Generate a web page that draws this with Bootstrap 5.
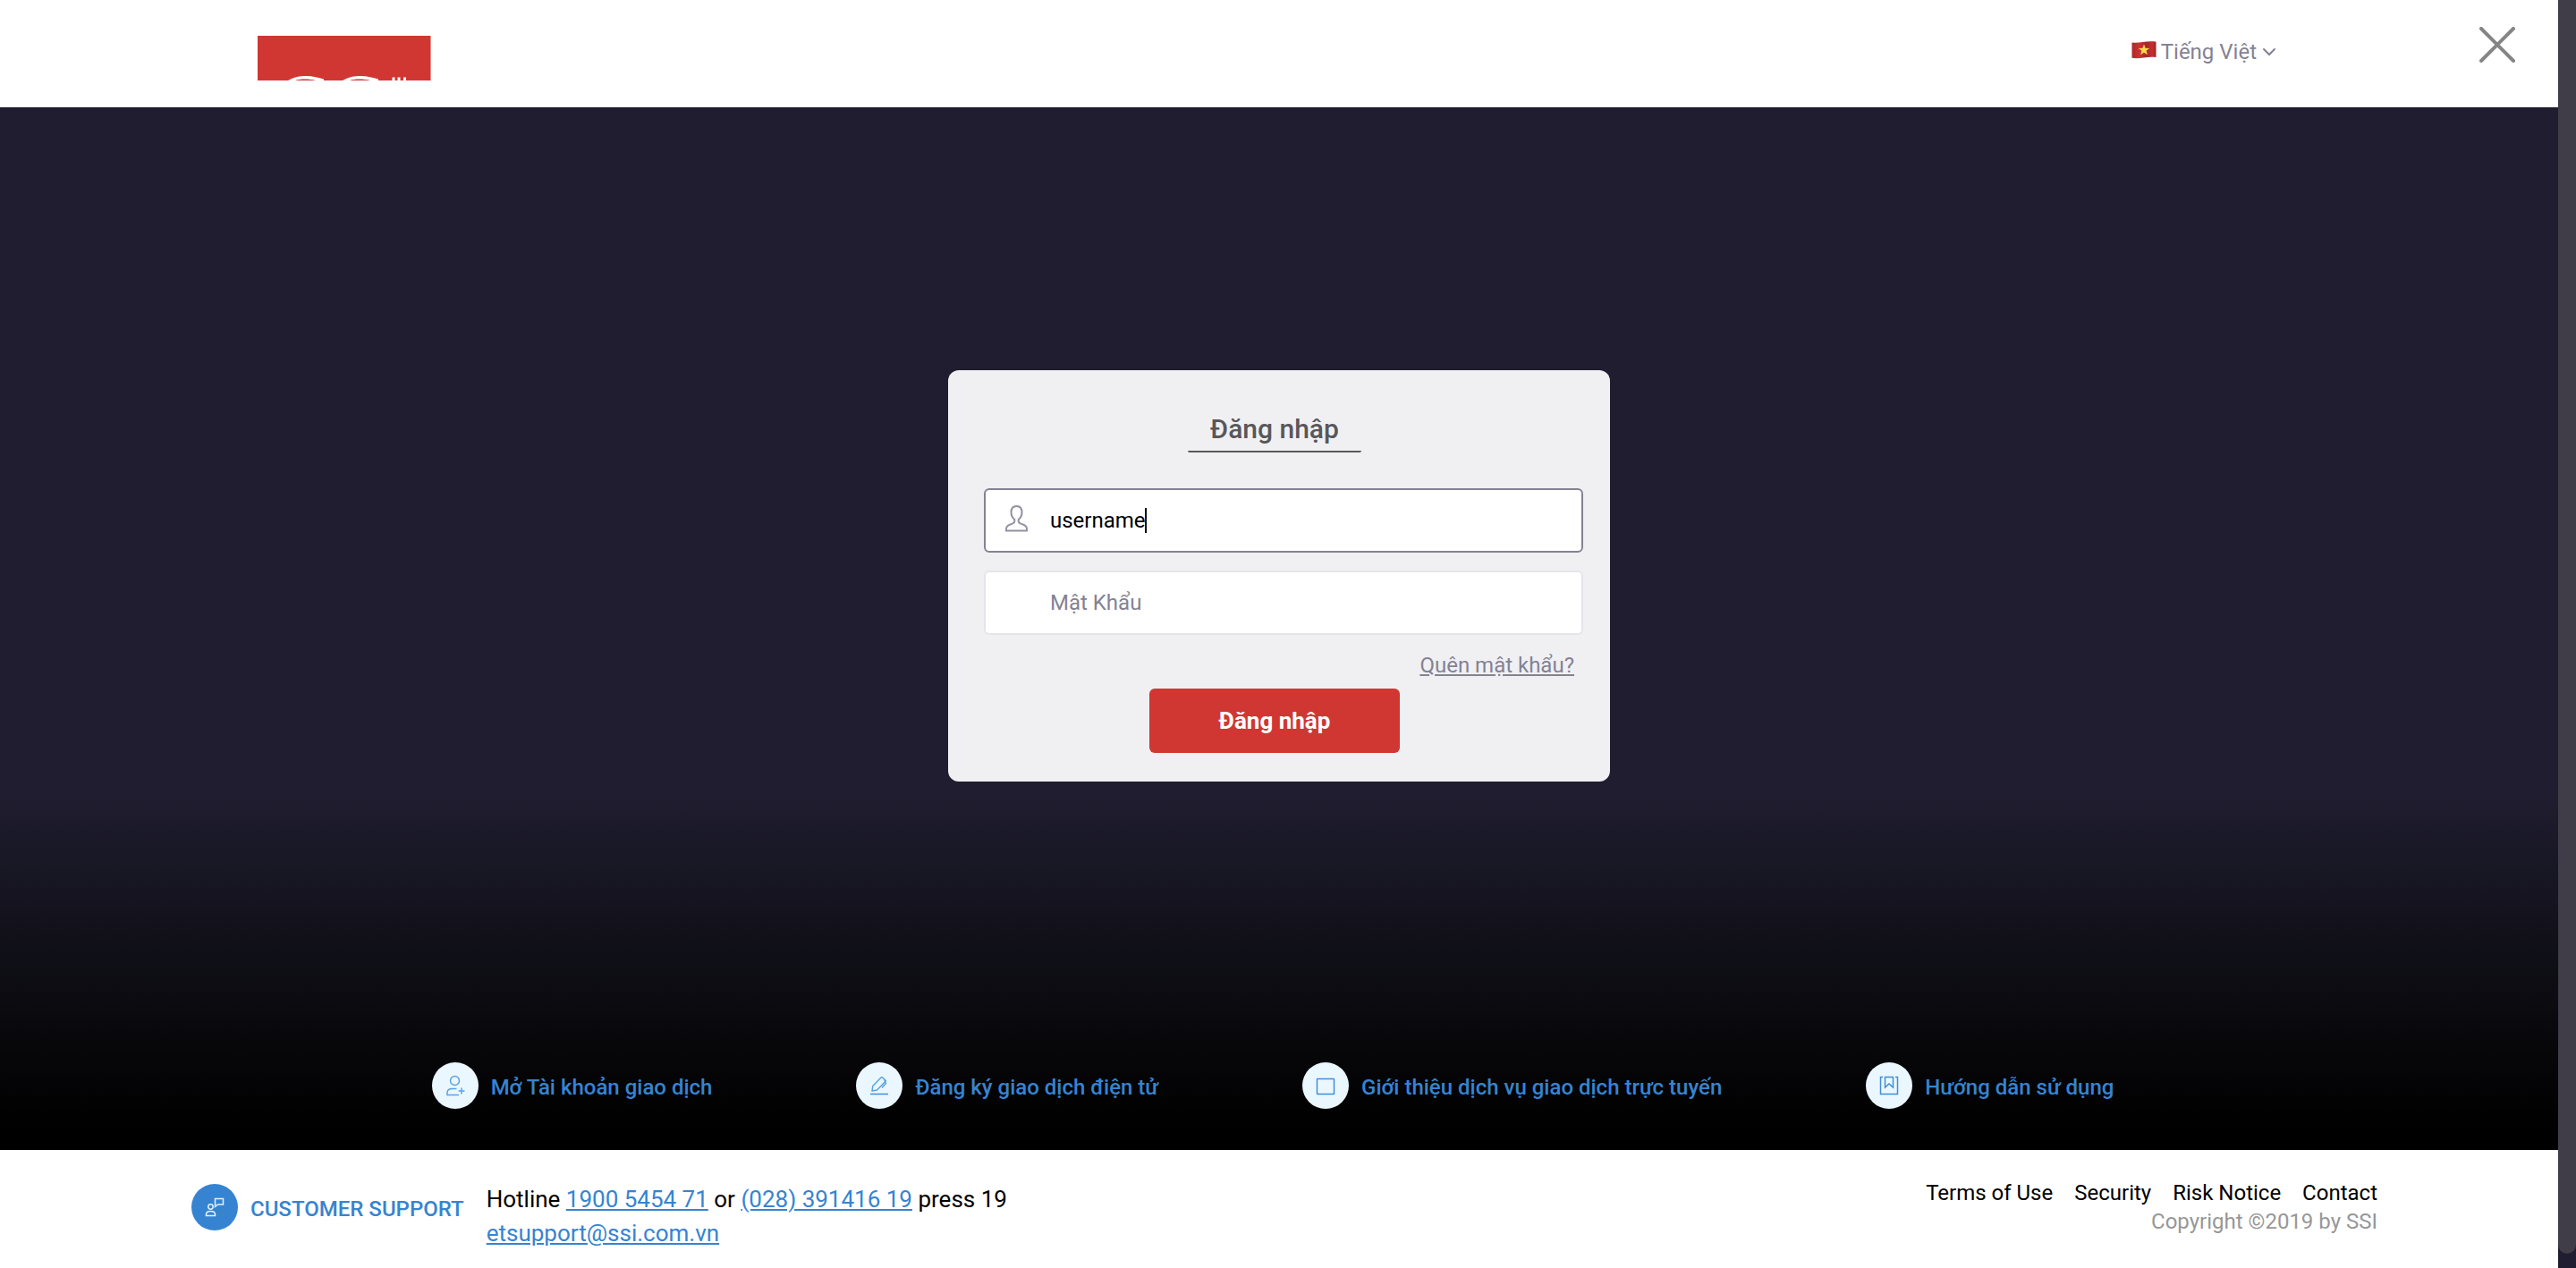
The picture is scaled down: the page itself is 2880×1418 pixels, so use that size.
<!DOCTYPE html>
<html lang="vi">
<head>
<meta charset="utf-8">
<meta name="viewport" content="width=device-width, initial-scale=1">
<title>SSI - Đăng nhập</title>
<link href="https://cdn.jsdelivr.net/npm/bootstrap@5.3.0/dist/css/bootstrap.min.css" rel="stylesheet">
<style>
  :root { --ink: #1f1d2f; --muted: #848293; --brand: #d03733; --blue: #3684d1; }
  body { font-family: Roboto, "Noto Sans", sans-serif; font-size: 24px; line-height: 32px; color: #000; background: var(--ink); }
  .page-col { min-width: 0; }
  .scroll-track { width: 20px; background: var(--ink); padding-bottom: 16px; }
  .scroll-thumb { background: #403d49; border-radius: 0 0 10px 10px; }
  .site-head { height: 120px; padding: 0 48px 0 288px; }
  .brand-logo { margin-top: 40px; }
  .lang-btn { margin: 42px 228px 0 0; color: var(--muted); font-size: 24px; line-height: 32px; gap: 5px; }
  .lang-btn .flag { margin-bottom: 4px; }
  .lang-btn .chevron { margin-left: 2px; }
  .close-btn { margin-top: 30px; }
  .hero { background: linear-gradient(#1f1d2f 0, #1f1d2f 66%, #0b0b10 86%, #000 98%); }
  .login-wrap { padding-top: 294px; }
  .login-card { width: 740px; padding: 44px 30px 32px 20px; background: #f0f0f3; border-radius: 12px; }
  .login-title { width: 194px; height: 48px; font-size: 30px; line-height: 44px; font-weight: 500; color: #58575a; border-bottom: 2px solid #58575a; border-radius: 2px; margin: 0 0 40px; }
  .field-list { margin-left: 20px; }
  .field-box { height: 72px; padding: 0 72px; font-size: 24px; line-height: 32px; color: #000; background: #fff; border: 2px solid #e4e4ea; border-radius: 6px; }
  .field-box:focus { box-shadow: none; border-color: var(--muted); color: #000; }
  .field-box::placeholder { color: var(--muted); opacity: 1; }
  .field-user { border-color: var(--muted); caret-color: transparent; }
  .user-glyph { left: 24px; top: 18px; }
  .text-caret { left: 180px; top: 22px; width: 2px; height: 28px; background: #000; }
  .field-gap { margin-bottom: 20px; }
  .forgot { color: var(--muted); margin: 18px 10px 10px 0; }
  .login-btn { width: 280px; height: 72px; font-size: 26px; font-weight: 700; color: #fff; background: var(--brand); border-radius: 6px; }
  .login-btn:hover { color: #fff; background: #b92f2b; }
  .quick-links { gap: 20px 161px; padding: 0 14px 46px 0; }
  .quick-links a { color: var(--blue); font-weight: 500; gap: 14px; }
  .disc { width: 52px; height: 52px; background: #ebf7ff; }
  .disc-blue { background: var(--blue); }
  .disc-label { padding-top: 3px; }
  .site-foot { min-height: 132px; padding: 0 202px 0 214px; background: #fff; }
  .foot-left a { color: var(--blue); }
  .support { margin-top: 38px; gap: 14px; color: var(--blue); font-weight: 500; }
  .hotline { margin: 36px 0 0 25px; font-size: 26px; line-height: 38px; }
  .foot-right { margin-top: 32px; }
  .foot-nav { gap: 24px; }
  .foot-nav a { color: #000; }
  .copyright { color: #979797; }
</style>
<script src="https://cdn.jsdelivr.net/npm/bootstrap@5.3.0/dist/js/bootstrap.bundle.min.js"></script>
</head>
<body>
<div class="d-flex min-vh-100">
  <div class="page-col flex-grow-1 d-flex flex-column">
    <header class="site-head bg-white d-flex align-items-start">
      <a href="#" class="brand-logo d-block lh-1" aria-label="SSI">
        <svg class="d-block" width="194" height="50" viewBox="0 0 194 50" fill="none">
          <rect width="193.500" height="50" fill="#d03733"/>
          <path d="M34 50C41 46 47 45 54 45C62 45 68 47 74 48.500V50H65C58 48 47 48 42 50Z" fill="#fff"/>
          <path d="M95 50C102 46 108 45 115 45C123 45 129 47 135 48.500V50H126C119 48 108 48 103 50Z" fill="#fff"/>
          <path d="M152 46.500v3.500M158 46.500v3.500M164.500 46.500v3.500" stroke="#fff" stroke-width="3"/>
        </svg>
      </a>
      <button type="button" class="lang-btn btn p-0 border-0 ms-auto d-flex align-items-center">
        <svg class="flag" width="28" height="20" viewBox="0 0 28 20">
          <defs><linearGradient id="flag"><stop stop-color="#b0262b"/><stop offset=".3" stop-color="#c93235"/><stop offset=".6" stop-color="#a9262b"/><stop offset=".85" stop-color="#c22f33"/><stop offset="1" stop-color="#9c2328"/></linearGradient></defs>
          <path d="M.5 1.500C8 3 18-1 27.500.8V18C18 16.500 9 20.500.5 18.800Z" fill="url(#flag)"/>
          <path d="M14 3.500l1.600 4.300 4.600.1-3.600 2.900 1.300 4.500-3.900-2.600-3.900 2.600 1.300-4.500-3.600-2.900 4.600-.1z" fill="#fbd94b"/>
        </svg>
        <span>Tiếng Việt</span>
        <svg class="chevron" width="14" height="10" viewBox="0 0 14 10" fill="none" stroke="#848293" stroke-width="2" stroke-linecap="round"><path d="M1 2l6 6 6-6"/></svg>
      </button>
      <button type="button" class="close-btn btn p-0 border-0" aria-label="Close">
        <svg class="d-block" width="40" height="40" viewBox="0 0 40 40" stroke="#858585" stroke-width="4" stroke-linecap="round"><path d="M2 2l36 36M38 2L2 38"/></svg>
      </button>
    </header>

    <main class="hero flex-grow-1 d-flex flex-column">
      <div class="login-wrap d-flex justify-content-center">
        <form class="login-card d-flex flex-column" onsubmit="return false">
          <h1 class="login-title text-center align-self-center">Đăng nhập</h1>
          <div class="field-list d-flex flex-column">
            <div class="position-relative field-gap">
              <input type="text" class="form-control field-box field-user" value="username" aria-label="Tên đăng nhập" autocomplete="off" spellcheck="false">
              <svg class="user-glyph position-absolute" width="26" height="32" viewBox="0 0 26 32" fill="none" stroke="#9391a2" stroke-width="2"><path d="M12.500 2c-4 0-6 3-6 7 0 3.500 2 6.500 3.800 8v2c0 1-1 2-2 2.400-4 1.400-7.300 2.600-7.300 5.600v2.500h23V27c0-3-3.300-4.200-7.300-5.600-1-.4-2-1.400-2-2.400v-2c1.800-1.500 3.800-4.500 3.800-8 0-4-2-7-6-7z"/></svg>
              <span class="text-caret position-absolute"></span>
            </div>
            <input type="password" class="form-control field-box" placeholder="Mật Khẩu" aria-label="Mật Khẩu">
            <a href="#" class="forgot align-self-end">Quên mật khẩu?</a>
          </div>
          <button type="submit" class="login-btn btn border-0 p-0 align-self-center">Đăng nhập</button>
        </form>
      </div>
      <nav class="quick-links mt-auto d-flex flex-wrap justify-content-center">
        <a href="#" class="d-flex align-items-center text-decoration-none">
          <span class="disc rounded-circle d-flex align-items-center justify-content-center"><svg width="24" height="24" viewBox="0 0 24 24" fill="none" stroke="#5ba3e0" stroke-width="1.500"><circle cx="11.500" cy="6.500" r="5"/><path d="M13.500 15.500H9c-4 0-6 2-6 4.500v2.500h13M19 14.500v7M15.500 18h7"/></svg></span>
          <span class="disc-label">Mở Tài khoản giao dịch</span></a>
        <a href="#" class="d-flex align-items-center text-decoration-none">
          <span class="disc rounded-circle d-flex align-items-center justify-content-center"><svg width="22" height="22" viewBox="0 0 22 22" fill="none" stroke="#5ba3e0" stroke-width="1.500" stroke-linejoin="round"><path d="M3 17l.8-5.500L13 2l1.500-.3 4 4L8.500 16zM16.500 4l2 4.500-4.500 5"/><path d="M1 20.500h20" stroke="#3f8fd8"/></svg></span>
          <span class="disc-label">Đăng ký giao dịch điện tử</span></a>
        <a href="#" class="d-flex align-items-center text-decoration-none">
          <span class="disc rounded-circle d-flex align-items-center justify-content-center"><svg width="22" height="22" viewBox="0 0 22 22" fill="none" stroke="#3f8fd8" stroke-width="1.500"><rect x="1.500" y="3.500" width="19" height="17" rx=".5"/></svg></span>
          <span class="disc-label">Giới thiệu dịch vụ giao dịch trực tuyến</span></a>
        <a href="#" class="d-flex align-items-center text-decoration-none">
          <span class="disc rounded-circle d-flex align-items-center justify-content-center"><svg width="22" height="22" viewBox="0 0 22 22" fill="none" stroke="#3f8fd8" stroke-width="1.500"><path d="M4 1.500H1.500v19h19v-19H18M6.500 1.500h9v11.500L11 9l-4.500 4z"/></svg></span>
          <span class="disc-label">Hướng dẫn sử dụng</span></a>
      </nav>
    </main>

    <footer class="site-foot d-flex flex-wrap align-items-start justify-content-between">
      <div class="foot-left d-flex align-items-start">
        <div class="support d-flex align-items-center">
          <span class="disc disc-blue rounded-circle d-flex align-items-center justify-content-center"><svg width="22" height="22" viewBox="0 0 22 22" fill="none" stroke="#e3f1fc" stroke-width="1.500"><path d="M11.500 1.500h9v6.500h-6l-3 2.500z"/><circle cx="6.500" cy="10.500" r="2.700"/><path d="M1.500 20.500v-1.500c0-2.500 2-3.500 5-3.500s5 1 5 3.500v1.500z"/></svg></span>
          <span class="disc-label">CUSTOMER SUPPORT</span>
        </div>
        <div class="hotline">Hotline <a href="#">1900 5454 71</a> or <a href="#">(028) 391416 19</a> press 19<br><a href="#">etsupport@ssi.com.vn</a></div>
      </div>
      <div class="foot-right text-end">
        <nav class="foot-nav d-flex justify-content-end">
          <a href="#" class="text-decoration-none">Terms of Use</a>
          <a href="#" class="text-decoration-none">Security</a>
          <a href="#" class="text-decoration-none">Risk Notice</a>
          <a href="#" class="text-decoration-none">Contact</a>
        </nav>
        <div class="copyright">Copyright ©2019 by SSI</div>
      </div>
    </footer>
  </div>
  <div class="scroll-track flex-shrink-0 d-flex flex-column" aria-hidden="true"><div class="scroll-thumb flex-grow-1"></div></div>
</div>
</body>
</html>
